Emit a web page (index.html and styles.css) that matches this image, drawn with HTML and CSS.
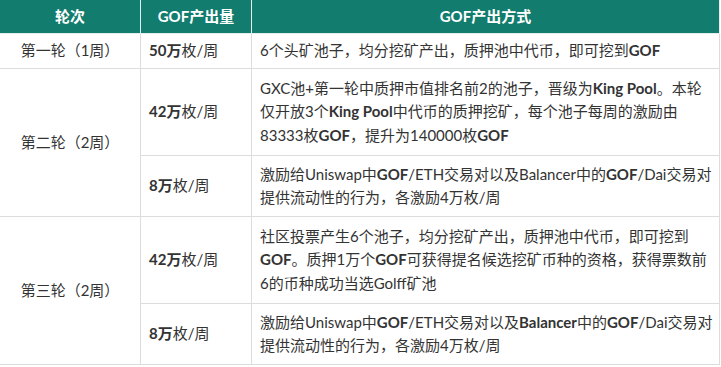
FILE: index.html
```html
<!DOCTYPE html>
<html lang="zh-CN">
<head>
<meta charset="utf-8">
<title>GOF产出</title>
<link rel="stylesheet" href="styles.css">
</head>
<body>
<table class="plan">
  <colgroup>
    <col class="c1"><col class="c2"><col class="c3">
  </colgroup>
  <thead>
    <tr class="head">
      <th>轮次</th>
      <th>GOF产出量</th>
      <th>GOF产出方式</th>
    </tr>
  </thead>
  <tbody>
    <tr class="r-one">
      <td class="round">第一轮（1周）</td>
      <td class="amt"><b>50万</b>枚/周</td>
      <td class="desc">6个头矿池子，均分挖矿产出，质押池中代币，即可挖到<b>GOF</b></td>
    </tr>
    <tr class="r-three">
      <td class="round" rowspan="2">第二轮（2周）</td>
      <td class="amt"><b>42万</b>枚/周</td>
      <td class="desc">GXC池+第一轮中质押市值排名前2的池子，晋级为<b>King Pool</b>。本轮<br>仅开放3个<b>King Pool</b>中代币的质押挖矿，每个池子每周的激励由<br>83333枚<b>GOF</b>，提升为140000枚<b>GOF</b></td>
    </tr>
    <tr class="r-two">
      <td class="amt"><b>8万</b>枚/周</td>
      <td class="desc">激励给Uniswap中<b>GOF</b>/ETH交易对以及Balancer中的<b>GOF</b>/Dai交易对<br>提供流动性的行为，各激励4万枚/周</td>
    </tr>
    <tr class="r-three">
      <td class="round" rowspan="2">第三轮（2周）</td>
      <td class="amt"><b>42万</b>枚/周</td>
      <td class="desc">社区投票产生6个池子，均分挖矿产出，质押池中代币，即可挖到<br><b>GOF</b>。质押1万个<b>GOF</b>可获得提名候选挖矿币种的资格，获得票数前<br>6的币种成功当选Golff矿池</td>
    </tr>
    <tr class="r-two">
      <td class="amt"><b>8万</b>枚/周</td>
      <td class="desc">激励给Uniswap中<b>GOF</b>/ETH交易对以及<b>Balancer</b>中的<b>GOF</b>/Dai交易对<br>提供流动性的行为，各激励4万枚/周</td>
    </tr>
  </tbody>
</table>
</body>
</html>
```

FILE: styles.css
```css
html, body {
  margin: 0;
  padding: 0;
  background: #ffffff;
}

body {
  font-family: Lato, "Noto Sans CJK SC", sans-serif;
  font-size: 15px;
  color: #333333;
}

.plan {
  border-collapse: collapse;
  table-layout: fixed;
  width: 721px;
  margin-left: -1px;
}

.c1 { width: 141px; }
.c2 { width: 111px; }
.c3 { width: auto; }

.plan th,
.plan td {
  border: 1px solid #dcdcdc;
  padding: 0 8px;
  line-height: 23.5px;
  vertical-align: middle;
}

.head th {
  background: #127c6e;
  color: #ffffff;
  font-weight: bold;
  text-align: center;
  height: 33px;
  border-color: #e4efed;
  border-top: none;
}

.round {
  text-align: center;
}

.amt {
  text-align: left;
}

.desc {
  text-align: left;
  white-space: nowrap;
}

.plan b {
  font-weight: bold;
  color: #333333;
}

.r-one td { height: 34px; }
.r-three td { height: 86px; }
.r-two td { height: 60px; }
```
